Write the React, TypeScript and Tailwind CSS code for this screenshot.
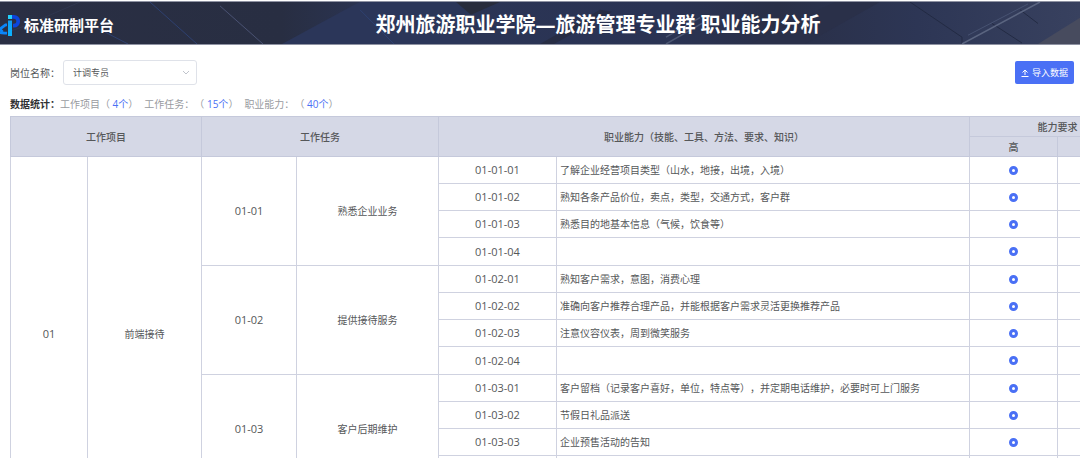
import { useState } from 'react';
import type { ChangeEvent } from 'react';

interface Ability {
  code: string;
  text: string;
}

interface Task {
  code: string;
  name: string;
  abilities: Ability[];
}

interface Project {
  code: string;
  name: string;
  tasks: Task[];
}

const project: Project = {
  code: '01',
  name: '前端接待',
  tasks: [
    {
      code: '01-01',
      name: '熟悉企业业务',
      abilities: [
        { code: '01-01-01', text: '了解企业经营项目类型（山水，地接，出境，入境）' },
        { code: '01-01-02', text: '熟知各条产品价位，卖点，类型，交通方式，客户群' },
        { code: '01-01-03', text: '熟悉目的地基本信息（气候，饮食等）' },
        { code: '01-01-04', text: '' },
      ],
    },
    {
      code: '01-02',
      name: '提供接待服务',
      abilities: [
        { code: '01-02-01', text: '熟知客户需求，意图，消费心理' },
        { code: '01-02-02', text: '准确向客户推荐合理产品，并能根据客户需求灵活更换推荐产品' },
        { code: '01-02-03', text: '注意仪容仪表，周到微笑服务' },
        { code: '01-02-04', text: '' },
      ],
    },
    {
      code: '01-03',
      name: '客户后期维护',
      abilities: [
        { code: '01-03-01', text: '客户留档（记录客户喜好，单位，特点等），并定期电话维护，必要时可上门服务' },
        { code: '01-03-02', text: '节假日礼品派送' },
        { code: '01-03-03', text: '企业预售活动的告知' },
        { code: '01-03-04', text: '' },
      ],
    },
    {
      code: '01-04',
      name: '',
      abilities: [{ code: '01-04-01', text: '' }],
    },
  ],
};

const stats = [
  { label: '工作项目', count: '4个' },
  { label: '工作任务：', count: '15个' },
  { label: '职业能力：', count: '40个' },
];

const totalRows = project.tasks.reduce((sum, t) => sum + t.abilities.length, 0);

const cell = 'border border-[#cfd2e0] p-0';
const headCell = 'border border-[#c5c9db] p-0 font-medium';
const radio =
  'block mx-auto w-[9px] h-[9px] appearance-none rounded-full border border-gray-300 bg-white checked:border-3 checked:border-[#4a70f5] cursor-pointer';

function Logo() {
  return (
    <svg className="w-5 h-[22px] shrink-0" viewBox="0 0 20 22" fill="none" aria-hidden="true">
      <defs>
        <linearGradient id="logoStem" x1="0" y1="0" x2="0" y2="1">
          <stop offset="0" stopColor="#0f9cf5" />
          <stop offset="1" stopColor="#0cb4ff" />
        </linearGradient>
      </defs>
      <path
        d="M12 1h2a6 6 0 0 1 6 6.200 6 6 0 0 1-6 6.300h-1V9.800h.8a2.500 2.500 0 0 0 0-5H12z"
        fill="#0c45dd"
      />
      <path d="M8 1h4v4H8z" fill="#22d0fb" />
      <path d="M8 6.500h4V22H8z" fill="url(#logoStem)" />
      <path d="M7 10.800H5.500L.5 14.500M-1 14.500l3.500 3.200M7 19.200H4.500L0 18.500" stroke="#0a86fb" strokeWidth="2.800" />
    </svg>
  );
}

function BannerBackground() {
  return (
    <svg
      className="absolute inset-0 w-full h-full"
      viewBox="0 0 1080 43"
      preserveAspectRatio="none"
      fill="none"
      aria-hidden="true"
    >
      <defs>
        <linearGradient id="banner" x1="0" y1="0" x2="1080" y2="0" gradientUnits="userSpaceOnUse">
          <stop offset="0" stopColor="#2a2f44" />
          <stop offset="0.26" stopColor="#282e42" />
          <stop offset="0.36" stopColor="#2b3556" />
          <stop offset="0.62" stopColor="#2a3353" />
          <stop offset="0.72" stopColor="#292f47" />
          <stop offset="0.85" stopColor="#2d3655" />
          <stop offset="1" stopColor="#38415f" />
        </linearGradient>
      </defs>
      <path d="M0 0h1080v43H0z" fill="url(#banner)" />
      <path d="M282 43 352 4l8-4h98l12 12v31z" fill="#2b3659" />
      <path d="M456 0h44l-29 13z" fill="#282c3c" />
      <path d="M540 43 600 8l12 2-58 33z" fill="#272d44" />
      <path d="M805 43 880 0h-45l-85 43z" fill="#2a3049" />
      <path d="M1038 43 1080 16v27z" fill="#474b5e" />
      <path d="M360 8 394 43M150 0l47 43M96 26l32 17" stroke="#2f4170" />
      <path d="M220 4 263 43" stroke="#4a5272" />
      <path d="M0 34 26 24 80 0" stroke="#30374f" />
      <path d="M910 0 962 36v7M1020 8l18 14M992 22l30 20" stroke="#222a43" />
      <path d="M962 43 1040 0" stroke="#5b6580" strokeWidth="1.500" />
      <path d="M666 43 702 22M666 36 700 16" stroke="#4c5672" strokeWidth="1.500" />
      <path d="M968 34 1028 2" stroke="#475271" />
    </svg>
  );
}

export default function App() {
  const [post, setPost] = useState('计调专员');

  return (
    <div
      lang="zh-CN"
      className="h-screen flex flex-col overflow-hidden bg-white text-[#555759] text-[10px] leading-4 font-['Open_Sans','Noto_Sans_CJK_SC',sans-serif] [text-spacing-trim:space-all]"
    >
      {/* Banner */}
      <header className="relative mt-px h-[44px] shrink-0 border-y border-[#8f93a3] bg-[#2a3045] overflow-hidden">
        <BannerBackground />
        <div className="relative h-full min-w-[1196px] flex items-center pt-[3px] text-white">
          <div className="flex flex-1 items-center gap-1 text-[15px] font-bold whitespace-nowrap">
            <Logo />
            <span>标准研制平台</span>
          </div>
          <h1 className="text-xl font-bold whitespace-nowrap">
            郑州旅游职业学院—旅游管理专业群 职业能力分析
          </h1>
          <div className="flex-1" />
        </div>
      </header>

      {/* Toolbar */}
      <div className="flex shrink-0 items-center pt-[15px] pl-[10px] pr-[6px]">
        <label htmlFor="post" className="w-[53px]">岗位名称：</label>
        <div className="relative">
          <select
            id="post"
            value={post}
            onChange={(e: ChangeEvent<HTMLSelectElement>) => setPost(e.target.value)}
            className="block w-[134px] h-[25px] pl-[9px] pr-5 appearance-none rounded-[3px] border border-[#dfe2e9] bg-white text-[9px] outline-none focus:border-[#4a70f5]"
          >
            <option>计调专员</option>
          </select>
          <svg
            className="absolute right-[7px] top-[9px] w-2 h-2 pointer-events-none"
            viewBox="0 0 8 8"
            fill="none"
            stroke="#c0c4cc"
            aria-hidden="true"
          >
            <path d="m1 2 3 3 3-3" />
          </svg>
        </div>
        <button
          type="button"
          className="ml-auto flex h-[23px] w-[59px] items-center justify-center gap-[3px] rounded-[2px] bg-[#4a70f5] hover:bg-[#3f63e0] text-white text-[9px] cursor-pointer"
        >
          <svg className="w-2 h-2" viewBox="0 0 8 8" fill="none" stroke="currentColor" aria-hidden="true">
            <path d="M.5 7.500h7M4 6V1M1.500 3.500 4 1l2.500 2.500" />
          </svg>
          导入数据
        </button>
      </div>

      {/* Statistics */}
      <div className="flex shrink-0 items-center pt-[11px] pb-1 pl-[10px] text-[#999b9f]">
        <strong className="w-[50px] font-bold text-[#303133]">数据统计：</strong>
        {stats.map((s) => (
          <span key={s.label} className="mr-[6px]">
            {s.label}（ <span className="text-[#4a70f5]">{s.count}</span>）
          </span>
        ))}
      </div>

      {/* Ability table */}
      <div className="flex-1 min-h-0 pl-[10px] overflow-hidden">
        <table className="w-full min-w-[1136px] table-fixed border-collapse">
          <colgroup>
            <col className="w-[77px]" />
            <col className="w-[114px]" />
            <col className="w-[95px]" />
            <col className="w-[142px]" />
            <col className="w-[118px]" />
            <col />
            <col className="w-[88px]" />
            <col className="w-[88px]" />
          </colgroup>
          <thead className="bg-[#d5d8e6]">
            <tr className="h-5">
              <th colSpan={2} rowSpan={2} className={headCell}>工作项目</th>
              <th colSpan={2} rowSpan={2} className={headCell}>工作任务</th>
              <th colSpan={2} rowSpan={2} className={headCell}>
                职业能力（技能、工具、方法、要求、知识）
              </th>
              <th colSpan={2} className={headCell}>能力要求</th>
            </tr>
            <tr className="h-5">
              <th className={headCell}>高</th>
              <th className={headCell}></th>
            </tr>
          </thead>
          <tbody>
            {project.tasks.map((task, ti) =>
              task.abilities.map((ability, ai) => (
                <tr key={ability.code} className={ai === 3 ? 'h-[28px]' : 'h-[27px]'}>
                  {ti === 0 && ai === 0 && (
                    <>
                      <td rowSpan={totalRows} className={`${cell} text-center text-[11px]`}>{project.code}</td>
                      <td rowSpan={totalRows} className={`${cell} text-center`}>{project.name}</td>
                    </>
                  )}
                  {ai === 0 && (
                    <>
                      <td rowSpan={task.abilities.length} className={`${cell} text-center text-[11px]`}>{task.code}</td>
                      <td rowSpan={task.abilities.length} className={`${cell} text-center`}>{task.name}</td>
                    </>
                  )}
                  <td className={`${cell} text-center text-[11px]`}>{ability.code}</td>
                  <td className="border border-[#cfd2e0] py-0 pl-[3px] pr-0">{ability.text}</td>
                  <td className={cell}>
                    <input type="radio" name={ability.code} aria-label={`${ability.code} 高`} defaultChecked className={radio} />
                  </td>
                  <td className={cell}>
                    <input type="radio" name={ability.code} aria-label={ability.code} className={radio} />
                  </td>
                </tr>
              ))
            )}
          </tbody>
        </table>
      </div>
    </div>
  );
}
